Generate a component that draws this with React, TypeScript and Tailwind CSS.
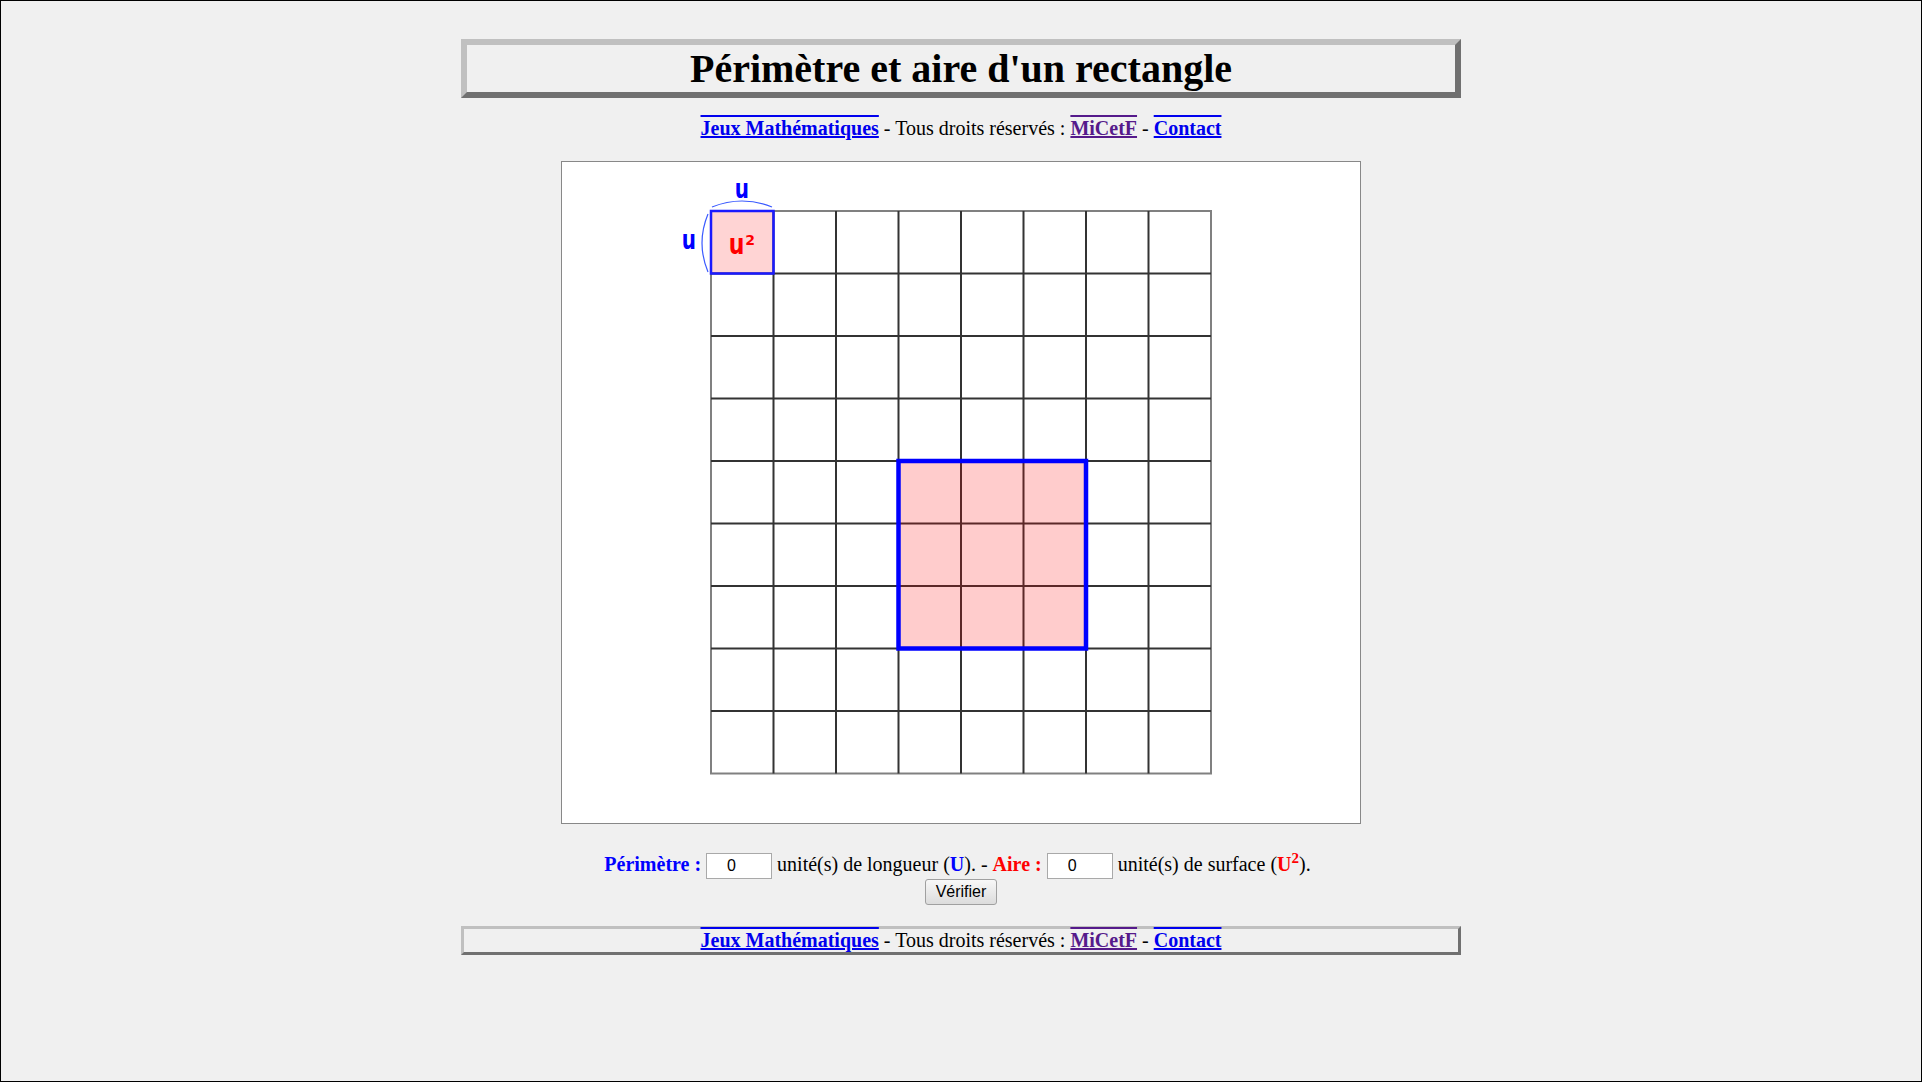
import React, { useState } from 'react';

const serif = "font-['Liberation_Serif','Times_New_Roman',serif]";
const sans = "font-['Liberation_Sans',Arial,sans-serif]";
const linkDeco = 'font-bold [text-decoration-line:underline_overline]';

const CELL = 62.5;
const COLS = 8;
const ROWS = 9;
const GX = 149;
const GY = 49;

const CreditsLine = () => (
  <p className={`${serif} text-[20px] leading-[23px] text-black text-center`}>
    <a href="#" className={`${linkDeco} text-[#0000ee]`}>Jeux Mathématiques</a>
    {' - Tous droits réservés : '}
    <a href="#" className={`${linkDeco} text-[#551a8b]`}>MiCetF</a>
    {' - '}
    <a href="#" className={`${linkDeco} text-[#0000ee]`}>Contact</a>
  </p>
);

const Board = () => {
  const w = COLS * CELL;
  const h = ROWS * CELL;
  const inner: React.ReactNode[] = [];
  for (let i = 1; i < COLS; i++) {
    const x = GX + i * CELL;
    inner.push(<line key={'v' + i} x1={x} y1={GY} x2={x} y2={GY + h} stroke="#333" strokeWidth={2} />);
  }
  for (let j = 1; j < ROWS; j++) {
    const y = GY + j * CELL;
    inner.push(<line key={'h' + j} x1={GX} y1={y} x2={GX + w} y2={y} stroke="#333" strokeWidth={2} />);
  }

  // selected rectangle: 3 x 3 cells starting at column 3, row 4
  const rx = GX + 3 * CELL;
  const ry = GY + 4 * CELL;

  return (
    <svg width={798} height={661} viewBox="0 0 798 661" className="block">
      <rect x={GX} y={GY} width={w} height={h} fill="#fff" stroke="#808080" strokeWidth={2} />
      {inner}

      {/* unit square */}
      <rect x={GX} y={GY} width={CELL} height={CELL} fill="rgba(255,0,0,0.17)" stroke="#1a1aff" strokeWidth={2.5} />
      <text x={174.5} y={94} textAnchor="middle" fill="#ff0000" fontFamily="'DejaVu Sans', sans-serif" fontWeight="bold" fontSize={22} transform="translate(0 -30) scale(1 1.3)">u</text>
      <text x={188} y={83} textAnchor="middle" fill="#ff0000" fontFamily="'DejaVu Sans', sans-serif" fontWeight="bold" fontSize={14}>2</text>

      <path d="M150 45 Q180 33 210 45" fill="none" stroke="#3a5aff" strokeWidth={1.2} />
      <text x={180} y={36} textAnchor="middle" fill="#0000ff" fontFamily="'DejaVu Sans', sans-serif" fontWeight="bold" fontSize={20} transform="translate(0 -10.5) scale(1 1.3)">u</text>

      <path d="M146 52 Q134 81 146 110" fill="none" stroke="#3a5aff" strokeWidth={1.2} />
      <text x={127} y={87} textAnchor="middle" fill="#0000ff" fontFamily="'DejaVu Sans', sans-serif" fontWeight="bold" fontSize={20} transform="translate(0 -26) scale(1 1.3)">u</text>

      {/* chosen rectangle */}
      <rect x={rx} y={ry} width={3 * CELL} height={3 * CELL} fill="rgba(255,0,0,0.2)" stroke="#0000ff" strokeWidth={4.5} />
    </svg>
  );
};

const App = () => {
  const [perimetre, setPerimetre] = useState('0');
  const [aire, setAire] = useState('0');

  const inputCls = `${sans} w-[66px] h-[26px] align-middle bg-white border border-[#a9a9a9] text-[16px] text-black pl-[20px] outline-none`;

  return (
    <div className="h-[1082px] w-full box-border border border-black bg-[#f0f0f0] overflow-hidden">
      <div className="w-[1000px] mx-auto pt-[38px]">
        <div className="border-[6px] border-t-[#c0c0c0] border-l-[#c0c0c0] border-b-[#707070] border-r-[#707070] h-[59px] flex items-center justify-center">
          <h1 className={`${serif} text-[40px] leading-[47px] font-bold text-black`}>Périmètre et aire d'un rectangle</h1>
        </div>

        <div className="mt-[19px]">
          <CreditsLine />
        </div>

        <div className="mt-[21px] mx-auto w-[800px] h-[663px] border border-[#888] bg-white">
          <Board />
        </div>

        <div className={`${serif} mt-[27px] pr-[7px] text-[20px] leading-[26px] text-black text-center`}>
          <span className="font-bold text-[#0000ff]">Périmètre :</span>{' '}
          <input className={inputCls} value={perimetre} onChange={e => setPerimetre(e.target.value)} />{' '}
          unité(s) de longueur (<span className="font-bold text-[#0000ff]">U</span>). -{' '}
          <span className="font-bold text-[#ff0000]">Aire :</span>{' '}
          <input className={inputCls} value={aire} onChange={e => setAire(e.target.value)} />{' '}
          unité(s) de surface (<span className="font-bold text-[#ff0000]">U<sup className="text-[15px] relative -top-[8px]">2</sup></span>).
        </div>
        <div className="flex justify-center">
          <button className={`${sans} h-[26px] w-[72px] text-[16px] text-black border border-[#a0a0a0] rounded-[3px] bg-gradient-to-b from-[#f8f8f8] to-[#dcdcdc]`}>Vérifier</button>
        </div>

        <div className="mt-[21px] border-[3px] border-t-[#c0c0c0] border-l-[#c0c0c0] border-b-[#707070] border-r-[#707070] h-[29px] flex items-center justify-center">
          <CreditsLine />
        </div>
      </div>
    </div>
  );
};

export default App;
